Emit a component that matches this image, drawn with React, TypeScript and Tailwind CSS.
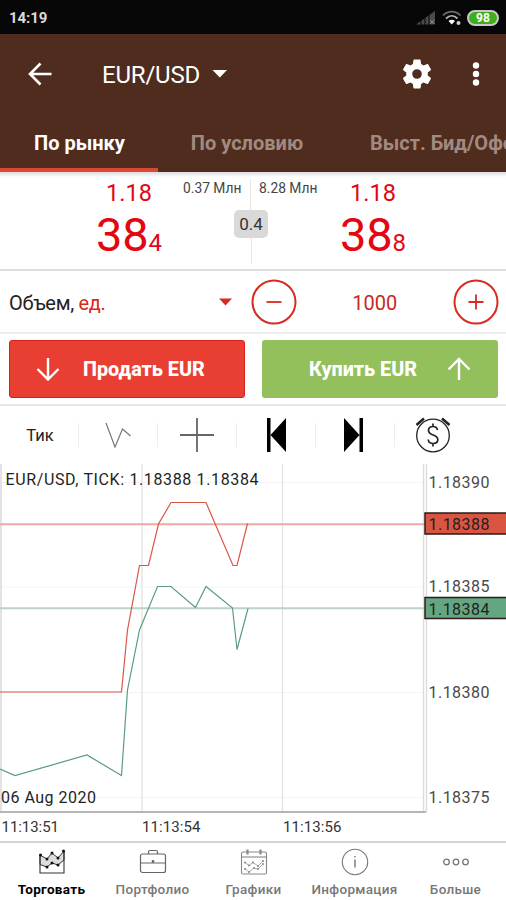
import type { ReactNode } from 'react';

const RED = '#d92a20';

function StatusBar() {
  return (
    <div className="flex h-[34px] items-center bg-[#070707] pt-[2px] pr-[7px] pl-[9px]">
      <span className="text-[15px] font-bold tracking-[-0.1px] text-[#dcdcdc]">14:19</span>
      <svg className="ml-auto" width="20" height="14" viewBox="0 0 20 14">
        <path d="M0 13.5 19 0v13.5Z" fill="#4b4b4b" />
        <path d="M5 8v6M9 5v9M13 3v11" stroke="#070707" strokeWidth="1" />
        <path d="m14 9 4 4m0-4-4 4" stroke="#8a8a8a" strokeWidth="1" />
      </svg>
      <svg className="ml-[6px]" width="20" height="16" viewBox="0 0 20 16" fill="none">
        <path d="M1 5.5C6 .3 13.500.3 18.500 5.500" stroke="#6c6c6c" strokeWidth="1.800" />
        <path d="M4 8.500c3.500-3.500 8-3.500 11.500 0" stroke="#b5b5b5" strokeWidth="1.800" />
        <path d="M6.500 11c2-1.800 4.500-1.800 6.500 0l-3.300 3.500Z" fill="#fff" />
        <circle cx="16.500" cy="13" r="2" fill="#cfcfcf" />
      </svg>
      <span className="ml-[5px] flex h-4 w-8 items-center justify-center rounded-full border-2 border-[#c9c9c9] bg-[#3fae1b] text-[12px] font-bold text-white">98</span>
    </div>
  );
}

function Header() {
  return (
    <header className="h-[138px] bg-[#502c1f] text-white">
      <div className="flex h-[80px] items-center pr-[20px] pl-[28px]">
        <svg width="24" height="24" viewBox="0 0 24 24" fill="none" stroke="#fff" strokeWidth="2.600">
          <path d="M23.500 12H3M12.500 1.500 2 12l10.500 10.500" />
        </svg>
        <span className="ml-[50px] w-[99px] pt-[2px] text-[24px] tracking-[-0.2px]">EUR/USD</span>
        <svg className="ml-[11px]" width="16" height="8" viewBox="0 0 16 8">
          <path d="M.5 0h14.500L7.800 7.500Z" fill="#fff" />
        </svg>
        <svg className="ml-auto" width="36" height="36" viewBox="0 0 24 24" fill="#fff">
          <path d="M19.140 12.940c.04-.3.060-.61.060-.94 0-.32-.02-.64-.07-.94l2.030-1.580a.49.490 0 0 0 .12-.61l-1.920-3.320a.488.488 0 0 0-.59-.22l-2.390.96c-.5-.38-1.030-.7-1.620-.94l-.36-2.540a.484.484 0 0 0-.48-.41h-3.840c-.24 0-.43.17-.47.410l-.36 2.540c-.59.240-1.130.57-1.620.94l-2.390-.96c-.22-.08-.47 0-.59.220L2.740 8.870c-.12.210-.08.470.12.610l2.030 1.580c-.05.3-.09.630-.09.940s.02.640.07.940l-2.030 1.580a.49.490 0 0 0-.12.610l1.920 3.320c.12.220.37.290.59.220l2.390-.96c.5.380 1.030.7 1.620.940l.36 2.540c.05.240.24.410.48.410h3.840c.24 0 .44-.17.470-.41l.36-2.540c.59-.24 1.130-.56 1.620-.94l2.390.96c.22.080.47 0 .59-.22l1.920-3.320c.12-.22.070-.47-.12-.61l-2.010-1.580ZM12 15.200A3.200 3.200 0 1 1 12 8.800a3.200 3.200 0 0 1 0 6.400Z" />
        </svg>
        <svg className="ml-[31px]" width="20" height="26" viewBox="0 0 20 26" fill="#fff">
          <circle cx="10" cy="4.500" r="3.200" />
          <circle cx="10" cy="13" r="3.200" />
          <circle cx="10" cy="21.500" r="3.200" />
        </svg>
      </div>
      <nav className="flex h-[58px] overflow-hidden text-[20px] font-bold whitespace-nowrap">
        <div className="flex w-[158px] shrink-0 justify-center border-b-4 border-[#dc4636] pt-[14px] pl-px">По рынку</div>
        <div className="w-[178px] shrink-0 pt-[14px] text-center text-[#a18a80]">По условию</div>
        <div className="shrink-0 pt-[14px] pl-[34px] text-[#a18a80]">Выст. Бид/Офер</div>
      </nav>
    </header>
  );
}

function Price({ big, small }: { big: string; small: string }) {
  return (
    <div className="text-[#e30613]">
      <div className="text-center text-[23.500px] leading-[28px]">1.18</div>
      <div className="flex items-baseline justify-center leading-[56px]">
        <span className="text-[47px] tracking-[-0.2px]">{big}</span>
        <span className="text-[24px]">{small}</span>
      </div>
    </div>
  );
}

function Quotes() {
  return (
    <section className="flex h-[99px] border-b-2 border-[#dedede] bg-linear-to-b from-[#dcdcdc] to-white to-[5px] pt-[7px]">
      <div className="flex w-[176px] justify-end pr-[14px]"><Price big="38" small="4" /></div>
      <div className="flex w-[150px] flex-col items-center text-[13.8px] text-[#444]">
        <div className="flex h-[31px] w-full leading-[18px] whitespace-nowrap">
          <span className="w-1/2 border-r border-[#e6e6e6] pl-[7px]">0.37 Млн</span>
          <span className="w-1/2 pl-[8px]">8.28 Млн</span>
        </div>
        <div className="flex h-[28px] w-[34px] items-center justify-center rounded-[5px] bg-[#d9d9d9] pt-px text-[17px] text-[#333]">0.4</div>
        <div className="h-[26px] w-px bg-[#e6e6e6]" />
      </div>
      <div className="pl-[14px]"><Price big="38" small="8" /></div>
    </section>
  );
}

function RoundButton({ plus = false }: { plus?: boolean }) {
  return (
    <svg width="46" height="46" viewBox="0 0 46 46" fill="none" stroke={RED}>
      <circle cx="23" cy="23" r="21.500" strokeWidth="2" />
      <path d={plus ? 'M15.500 23h15M23 15.500v15' : 'M15.500 23h15'} strokeWidth="1.800" />
    </svg>
  );
}

function Volume() {
  return (
    <section className="flex h-[63px] items-center border-b-2 border-[#ededed] pt-px pr-[7px] pl-[9px] text-[20px]">
      <span className="w-[210px] pt-px tracking-[-0.3px] text-[#222]">Объем, <span className="text-[#d82a20]">ед.</span></span>
      <svg width="13" height="8" viewBox="0 0 13 8"><path d="M0 .5h13L6.500 7.500Z" fill={RED} /></svg>
      <div className="ml-[18.500px] flex"><RoundButton /></div>
      <span className="flex-1 pt-px text-center text-[#c9281e]">1000</span>
      <RoundButton plus />
    </section>
  );
}

function Arrow({ down = false }: { down?: boolean }) {
  return (
    <svg width="24" height="24" viewBox="0 0 24 24" fill="none" stroke="#fff" strokeWidth="2.400">
      <path d={down ? 'M12 1v21M1.500 12 12 22.500 22.500 12' : 'M12 23V2M1.500 12.500 12 2l10.500 10.500'} />
    </svg>
  );
}

function OrderButtons() {
  return (
    <section className="flex h-[72px] gap-[17px] border-b-2 border-[#e8e8e8] pt-[6px] pl-[9px] text-[19.8px] font-extrabold text-white">
      <button className="flex h-[58px] w-[236px] items-center rounded-[3px] border border-[#d8201a] bg-[#e93e32] pl-[26px]">
        <Arrow down />
        <span className="ml-[23px] pt-px">Продать EUR</span>
      </button>
      <button className="flex h-[58px] w-[236px] items-center rounded-[3px] bg-[#94bf5d] pl-[47px]">
        <span className="w-[115px] pt-px text-left">Купить EUR</span>
        <span className="ml-[23px]"><Arrow /></span>
      </button>
    </section>
  );
}

const tools = [
  <span className="pt-[2px] pl-[2px] text-[16.500px] text-[#222]">Тик</span>,
  <svg width="26" height="26" viewBox="0 0 26 26" fill="none" stroke="#777" strokeWidth="1.200">
    <path d="m1 1 9 24 7.500-18 8 7" />
  </svg>,
  <svg width="34" height="34" viewBox="0 0 34 34" stroke="#666" strokeWidth="1.800">
    <path d="M0 17h34M17 0v34" />
  </svg>,
  <svg width="20" height="34" viewBox="0 0 20 34">
    <path d="M1 0h3.500v34H1ZM20 0v34L4.500 17Z" />
  </svg>,
  <svg className="mr-[2px]" width="20" height="34" viewBox="0 0 20 34">
    <path d="M19 0h-3.500v34H19ZM0 0v34l15.500-17Z" />
  </svg>,
  <svg className="mr-[3px]" width="36" height="36" viewBox="0 0 36 36" fill="none" stroke="#222">
    <circle cx="18" cy="18.500" r="16.300" strokeWidth="1.300" />
    <path d="M1.500 8 9 1.500M27 1.500 34.500 8" strokeWidth="2.600" />
    <path d="M22.500 13c-.5-2.500-2.300-3.500-4.500-3.500-2.500 0-4.500 1.500-4.500 4 0 5.500 9.300 3.500 9.300 9 0 2.500-2 4-4.800 4-2.500 0-4.500-1.500-4.800-4M18 6.500v3M18 26.500v3" strokeWidth="1.700" />
  </svg>,
];

function ChartTools() {
  return (
    <section className="flex h-[58px] items-center">
      {tools.map((icon, i) => (
        <div key={i} className={`flex h-6 w-[79px] items-center justify-center ${i < 5 ? 'border-r border-[#eee]' : ''}`}>
          {icon}
        </div>
      ))}
    </section>
  );
}

const levels = [
  { y: 482, label: '1.18390' },
  { y: 586.5, label: '1.18385' },
  { y: 692, label: '1.18380' },
  { y: 797, label: '1.18375' },
];

function Chart() {
  return (
    <svg className="block" width="506" height="377" viewBox="0 464 506 377">
      {levels.map(l => (
        <g key={l.label}>
          <path d={`M2 ${l.y + 0.5}H424`} stroke="#f4f4f4" />
          <text x="428.500" y={l.y + 5.5} fontSize="16" textLength="61" fill="#4a4a4a">{l.label}</text>
        </g>
      ))}
      <path d="M142 464v348M282.500 464v348" stroke="#e2e2e2" strokeWidth="1.300" />
      <path d="M1 464v348" stroke="#e3e3e3" strokeWidth="2" />
      <path d="M423.500 464v348M426.500 464v348" stroke="#dedede" strokeWidth="1.500" />
      <path d="M0 812h426" stroke="#b5b5b5" strokeWidth="2" />

      <path d="M0 524.300h425" stroke="#efa9a3" strokeWidth="2" />
      <path d="M0 608.300h425" stroke="#b9d3c6" strokeWidth="2" />
      <g fill="none" strokeWidth="1.200">
        <path d="M0 692h121.500l6-62 12-64.500h9l10-41.500 12.500-21.500h35l27 63h4l10.500-42" stroke="#d9554a" />
        <path d="m0 769 15 6.500 72-20.500 34.500 20.500 6-85.500 12-60 18-43.500h13.500l24.500 21 10.500-21 26.500 21.500 4.500 41.500 11-41" stroke="#5c9c80" />
      </g>

      <g stroke="#2b1a17" strokeWidth="1.500">
        <rect x="425" y="513" width="90" height="21" fill="#d95542" />
        <rect x="425" y="597.500" width="90" height="21" fill="#65a682" />
      </g>
      <g fontSize="16" fill="#1f1f1f">
        <text x="428.500" y="530.400" textLength="61">1.18388</text>
        <text x="428.500" y="614.500" textLength="61">1.18384</text>
        <text x="5.500" y="484.500" textLength="253">EUR/USD, TICK: 1.18388 1.18384</text>
        <text x="1" y="803" textLength="95">06 Aug 2020</text>
      </g>
      <g fontSize="15" fill="#333">
        <text x="1.500" y="832" textLength="57.500">11:13:51</text>
        <text x="142" y="832" textLength="58.500">11:13:54</text>
        <text x="283" y="832" textLength="58.500">11:13:56</text>
      </g>
    </svg>
  );
}

function NavItem({ label, icon, active = false }: { label: string; icon: ReactNode; active?: boolean }) {
  return (
    <div className={`flex flex-1 flex-col items-center ${active ? 'font-bold text-black' : 'font-medium text-[#777]'}`}>
      <div className="flex h-[37px] items-center">{icon}</div>
      <span className="text-[13.5px] leading-[18px] tracking-[0.3px]">{label}</span>
    </div>
  );
}

function BottomNav() {
  return (
    <nav className="flex h-[59px] border-t-2 border-[#d4d4d4] pl-px">
      <NavItem
        active
        label="Торговать"
        icon={
          <svg width="26" height="26" viewBox="0 0 26 26" fill="none" stroke="#333">
            <path d="M1 6v9.500l7 2.500 5-4 6 2 6-5V2l-6 7-6-5-5 6Z" fill="#ddd" strokeWidth="1" />
            <path d="M1 6v18h24V2" strokeWidth="1.100" />
            <path d="M1.500 6h0M8 10h0M13 4h0M19 9h0M24.500 2h0M8 18h0M13 14h0M19 16h0" stroke="#111" strokeWidth="3" strokeLinecap="round" />
          </svg>
        }
      />
      <NavItem
        label="Портфолио"
        icon={
          <svg width="28" height="26" viewBox="0 0 28 26" fill="none" stroke="#666" strokeWidth="1.200">
            <rect x="1.500" y="5" width="25" height="18.500" rx="2" />
            <path d="M9.500 5V3q0-1.500 1.500-1.500h6q1.500 0 1.500 1.500v2M1.500 14h25" />
            <circle cx="14" cy="12.500" r=".8" fill="#444" />
          </svg>
        }
      />
      <NavItem
        label="Графики"
        icon={
          <svg width="28" height="28" viewBox="0 0 28 28" fill="none" stroke="#888" strokeWidth="1.100">
            <rect x="1.500" y="4" width="25" height="22" rx="1.500" />
            <path d="M1.500 9h25" />
            <path d="M7.500 1.500v5M20.500 1.500v5" strokeWidth="2.200" />
            <path d="m5 14.500 4 3 4-3 5 3.500 5-5M5 21l4 3 5-4 4 1 5-5" strokeWidth=".7" />
            <path d="M5 14.500h0M9 17.500h0M13 14.500h0M18 18h0M23 13h0M5 21h0M9 24h0M14 20h0M18 21h0M23 16h0" strokeWidth="2" strokeLinecap="round" />
          </svg>
        }
      />
      <NavItem
        label="Информация"
        icon={
          <svg width="28" height="28" viewBox="0 0 28 28" fill="none" stroke="#777" strokeWidth="1.100">
            <circle cx="14" cy="14" r="12.700" />
            <path d="M14 11.500v8M14 8v1.600" strokeWidth="1.400" />
          </svg>
        }
      />
      <NavItem
        label="Больше"
        icon={
          <svg width="28" height="8" viewBox="0 0 28 8" fill="none" stroke="#777" strokeWidth="1.300">
            <circle cx="4.500" cy="4" r="2.800" />
            <circle cx="14" cy="4" r="2.800" />
            <circle cx="23.500" cy="4" r="2.800" />
          </svg>
        }
      />
    </nav>
  );
}

export default function App() {
  return (
    <div className="h-[900px] w-[506px] overflow-hidden bg-white font-['Roboto',sans-serif]">
      <StatusBar />
      <Header />
      <Quotes />
      <Volume />
      <OrderButtons />
      <ChartTools />
      <Chart />
      <BottomNav />
    </div>
  );
}
